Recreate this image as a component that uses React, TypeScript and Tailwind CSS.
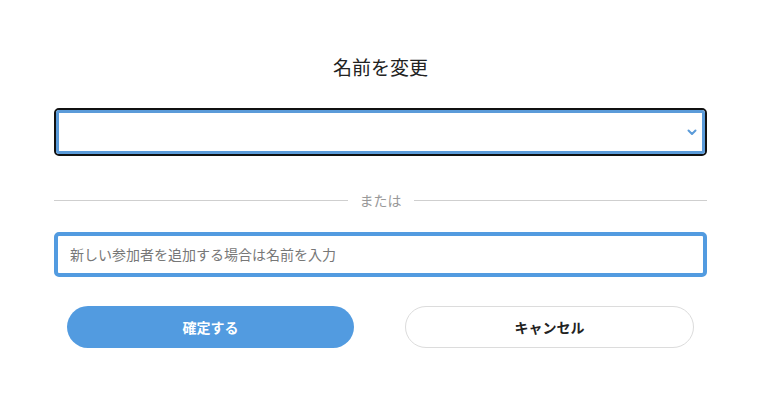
import React from "react";

export default function App() {
  const font = { fontFamily: '"Noto Sans CJK JP", "Noto Sans", sans-serif' };
  return (
    <div className="w-[758px] h-[412px] bg-white" style={font}>
      <div className="ml-[54px] w-[653px] flex flex-col pt-[53px]">
        <h1 className="h-[28px] leading-[28px] text-center text-[19px] text-[#222] font-normal">
          名前を変更
        </h1>
        <div className="mt-[27px] h-[48px] border-2 border-[#111] rounded-[5px]">
          <div className="h-full border-[3px] border-[#5b9bd9] rounded-[3px] flex items-center justify-end pr-[5px]">
            <svg width="10" height="7" viewBox="0 0 10 7" fill="none">
              <path d="M1.5 1.5 L5 5 L8.5 1.5" stroke="#5b9bd9" strokeWidth="2" strokeLinecap="round" strokeLinejoin="round" />
            </svg>
          </div>
        </div>
        <div className="mt-[34px] h-[20px] flex items-center gap-[12px]">
          <div className="flex-1 h-px bg-[#cfcfcf]" />
          <span className="text-[14px] leading-[20px] text-[#999]">または</span>
          <div className="flex-1 h-px bg-[#cfcfcf]" />
        </div>
        <div className="mt-[22px] h-[45px] border-4 border-[#529be0] rounded-[5px] flex items-center px-[12px]">
          <input
            className="w-full outline-none text-[14px] text-[#333] placeholder:text-[#777] bg-transparent"
            placeholder="新しい参加者を追加する場合は名前を入力"
            style={font}
          />
        </div>
        <div className="mt-[29px] px-[13px] flex gap-[51px]">
          <button
            className="flex-1 h-[42px] rounded-full bg-[#529be0] text-white text-[14px] font-bold"
            style={font}
          >
            確定する
          </button>
          <button
            className="flex-1 h-[42px] rounded-full bg-white border border-[#dcdcdc] text-[#222] text-[14px] font-bold"
            style={font}
          >
            キャンセル
          </button>
        </div>
      </div>
    </div>
  );
}
